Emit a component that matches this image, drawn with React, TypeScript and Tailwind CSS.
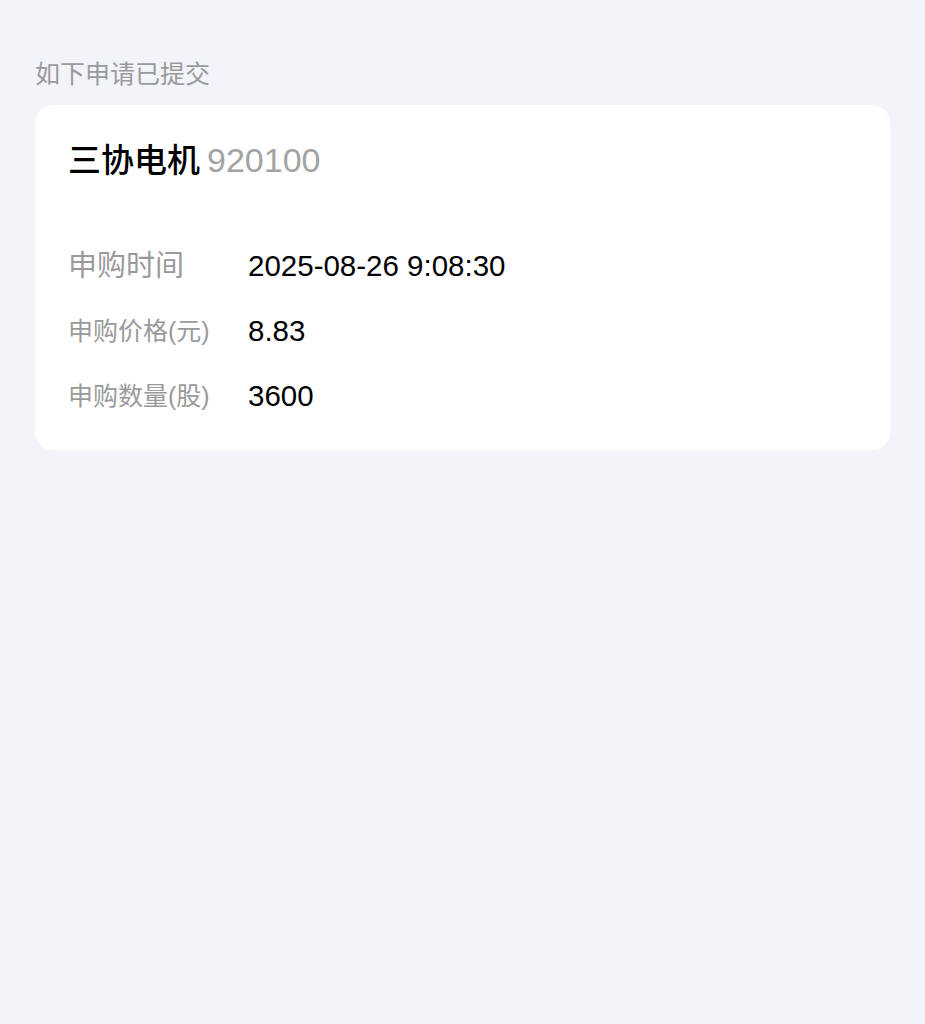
import React from 'react'

const rows = [
  { label: '申购时间', value: '2025-08-26 9:08:30', big: true },
  { label: '申购价格(元)', value: '8.83', big: false },
  { label: '申购数量(股)', value: '3600', big: false },
]

export default function App() {
  return (
    <main
      className="min-h-[1024px] w-full bg-[#f3f4f9] px-[35px] pt-[56px]"
      style={{ fontFamily: '"Liberation Sans", "Noto Sans CJK SC", sans-serif' }}
    >
      <p className="text-[25px] leading-[37px] text-[#9a9a9c]">如下申请已提交</p>

      <section className="mt-[12px] w-[855px] rounded-[18px] bg-white pl-[33px] pt-[35px] pb-[21px]">
        <div className="flex items-baseline gap-[7px] leading-[40px]">
          <span className="text-[33px] font-medium text-black">三协电机</span>
          <span className="text-[34px] text-[#a3a3a3]">920100</span>
        </div>

        <div className="mt-[53px] flex flex-col">
          {rows.map((row) => (
            <InfoRow key={row.label} {...row} />
          ))}
        </div>
      </section>
    </main>
  )
}

const InfoRow = ({ label, value, big }: { label: string; value: string; big: boolean }) => {
  return (
    <div className="flex h-[65px] items-center">
      <span className={`w-[180px] text-[#9a9a9c] ${big ? 'text-[29px]' : 'text-[25px]'}`}>{label}</span>
      <span className="text-[29.5px] text-black">{value}</span>
    </div>
  )
}
